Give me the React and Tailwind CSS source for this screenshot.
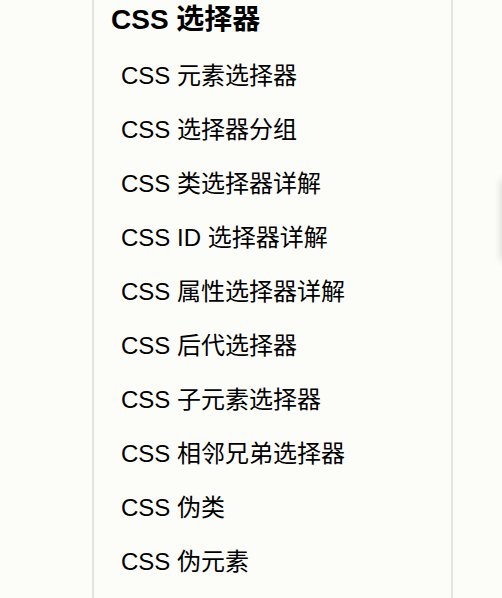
import React from "react";

const items = [
  "CSS 元素选择器",
  "CSS 选择器分组",
  "CSS 类选择器详解",
  "CSS ID 选择器详解",
  "CSS 属性选择器详解",
  "CSS 后代选择器",
  "CSS 子元素选择器",
  "CSS 相邻兄弟选择器",
  "CSS 伪类",
  "CSS 伪元素",
];

export default function App() {
  return (
    <div
      className="relative h-[598px] w-full overflow-hidden bg-[#fcfcf9] text-black"
      style={{ fontFamily: '"Liberation Sans", "Noto Sans CJK SC", sans-serif' }}
    >
      <div className="ml-[92px] h-full w-[361px] border-x-2 border-[#e3e3e1]">
        <div className="flex h-[39px] items-center pl-[17px] text-[28px] font-bold">
          CSS 选择器
        </div>
        <ul className="pt-[10px]">
          {items.map((t) => (
            <li key={t} className="flex h-[54px] items-center pl-[27px] text-[24px]">
              {t}
            </li>
          ))}
        </ul>
      </div>
      <div className="absolute right-[-24px] top-[180px] h-[80px] w-[24px] bg-[#fcfcf9] shadow-[0_0_8px_rgba(0,0,0,0.18)]" />
    </div>
  );
}
